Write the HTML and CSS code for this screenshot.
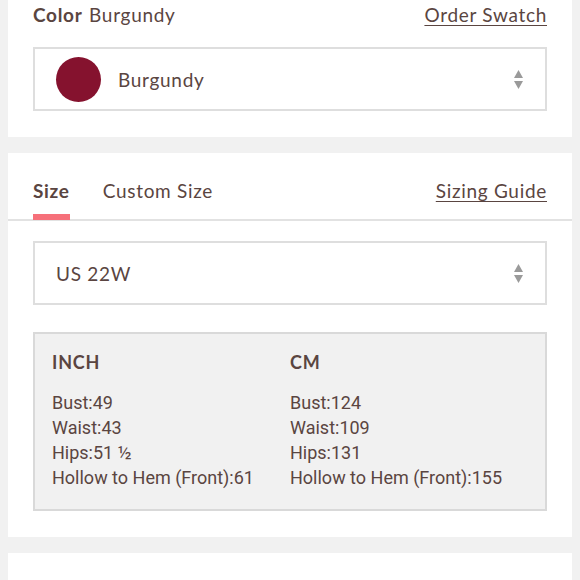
FILE: index.html
```html
<!DOCTYPE html>
<html>
<head>
<meta charset="utf-8">
<link rel="stylesheet" href="styles.css">
</head>
<body>
<section class="card card-color">
  <div class="head-row">
    <div class="label"><b>Color</b> Burgundy</div>
    <a class="link">Order Swatch</a>
  </div>
  <div class="select">
    <span class="swatch"></span>
    <span class="select-text">Burgundy</span>
    <svg class="arrows" width="9" height="19" viewBox="0 0 9 19"><path d="M4.5 0 L9 8 L0 8 Z M0 11 L9 11 L4.5 19 Z" fill="#9a9a9a"/></svg>
  </div>
</section>
<section class="card card-size">
  <div class="tabs">
    <div class="tab active">Size</div>
    <div class="tab">Custom Size</div>
    <a class="link tab-link">Sizing Guide</a>
  </div>
  <div class="body">
    <div class="select plain">
      <span class="select-text">US 22W</span>
      <svg class="arrows" width="9" height="19" viewBox="0 0 9 19"><path d="M4.5 0 L9 8 L0 8 Z M0 11 L9 11 L4.5 19 Z" fill="#9a9a9a"/></svg>
    </div>
    <div class="measure">
      <div class="col">
        <div class="col-title">INCH</div>
        <div class="row">Bust:49</div>
        <div class="row">Waist:43</div>
        <div class="row">Hips:51 ½</div>
        <div class="row">Hollow to Hem (Front):61</div>
      </div>
      <div class="col">
        <div class="col-title">CM</div>
        <div class="row">Bust:124</div>
        <div class="row">Waist:109</div>
        <div class="row">Hips:131</div>
        <div class="row">Hollow to Hem (Front):155</div>
      </div>
    </div>
  </div>
</section>
<section class="card card-next"></section>
</body>
</html>
```
FILE: styles.css
```css
html, body {
  margin: 0;
  padding: 0;
  background: #f1f1f1;
}
body {
  font-family: "Lato", "Open Sans", sans-serif;
  color: #5a4541;
  width: 580px;
  height: 580px;
  overflow: hidden;
  letter-spacing: 0.7px;
}
.card {
  background: #fff;
  margin: 0 8px 16px 8px;
}
.card-color {
  padding: 0 25px 26px 25px;
}
.head-row {
  display: flex;
  justify-content: space-between;
  align-items: flex-start;
  height: 47px;
  font-size: 19px;
  line-height: 30px;
}
.label b {
  font-weight: 700;
  margin-right: 1px;
}
.link {
  text-decoration: underline;
  text-underline-offset: 3px;
  text-decoration-thickness: 1px;
  font-size: 19px;
  color: #5a4541;
}
.select {
  box-sizing: border-box;
  height: 64px;
  border: 2px solid #dedede;
  display: flex;
  align-items: center;
  padding: 0 22px 0 21px;
  font-size: 19px;
}
.swatch {
  width: 45px;
  height: 45px;
  border-radius: 50%;
  background: #85122e;
  margin-right: 17px;
}
.select-text {
  flex: 1;
}
.arrows {
  display: block;
}
.card-size {
  padding: 0;
}
.tabs {
  display: flex;
  align-items: flex-start;
  padding: 26px 25px 0 25px;
  height: 40px;
  border-bottom: 2px solid #e2e2e2;
  font-size: 19px;
  line-height: 24px;
}
.tab {
  margin-right: 33px;
  position: relative;
  height: 40px;
}
.tab.active {
  font-weight: 700;
}
.tab.active::after {
  content: "";
  position: absolute;
  left: 0;
  right: 0;
  bottom: -1px;
  height: 6px;
  background: #f6707a;
}
.tab-link {
  margin-left: auto;
  line-height: 24px;
}
.body {
  padding: 20px 25px 26px 25px;
}
.plain {
  padding-left: 21px;
}
.measure {
  margin-top: 27px;
  box-sizing: border-box;
  height: 179px;
  background: #f1f1f1;
  border: 2px solid #d9d9d9;
  display: grid;
  grid-template-columns: 238px 1fr;
  padding: 16px 17px 0 17px;
  font-family: "Roboto", sans-serif;
  font-size: 18px;
  letter-spacing: 0;
}
.col-title {
  font-family: "Lato", sans-serif;
  font-weight: 700;
  font-size: 18px;
  letter-spacing: 0.8px;
  line-height: 24px;
  margin-bottom: 16px;
}
.row {
  line-height: 25px;
}
.card-next {
  height: 40px;
  margin-bottom: 0;
}
```
